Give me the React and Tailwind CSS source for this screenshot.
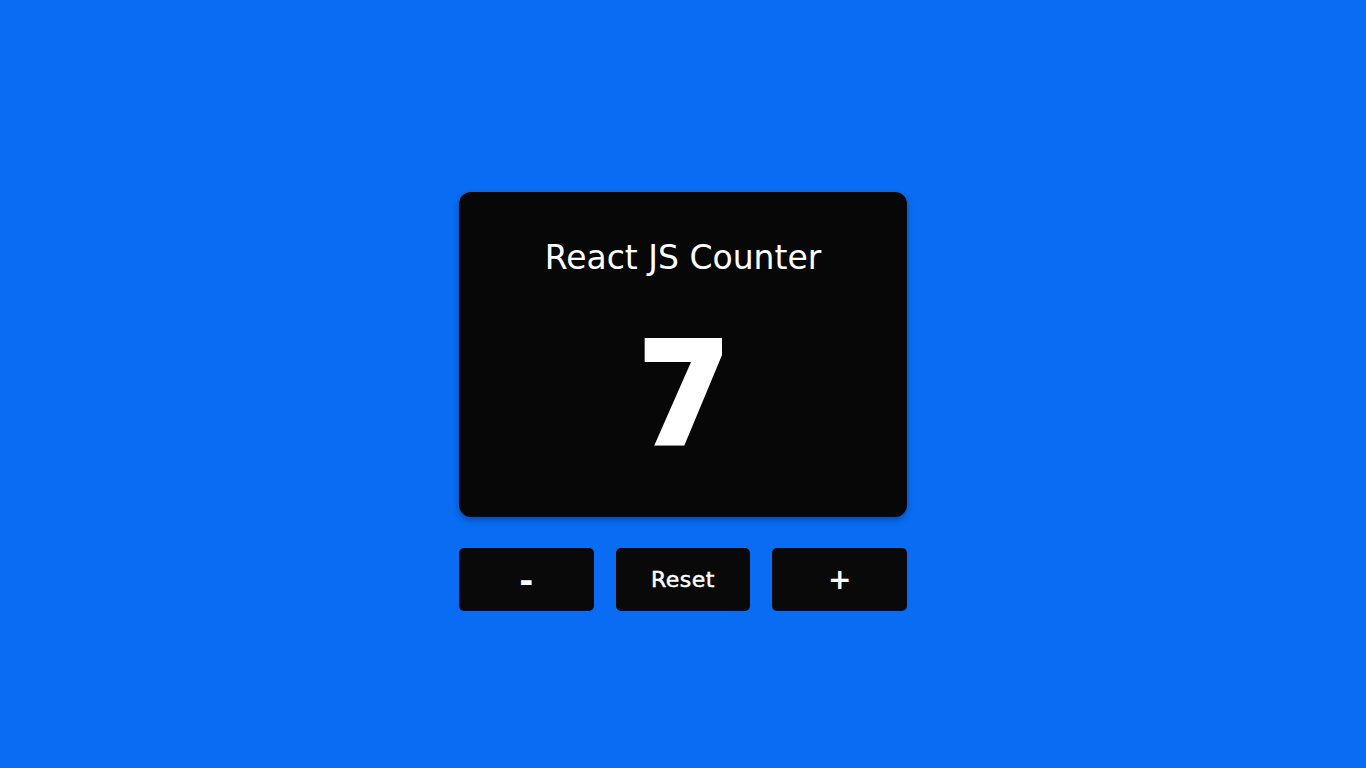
export default function App() {
  const count = 7

  return (
    <div className="min-h-screen bg-[#0a6cf2] flex flex-col items-center justify-center pt-[35px]" style={{ fontFamily: '"DejaVu Sans", "Open Sans", sans-serif' }}>
      <div className="w-[448px] h-[325px] bg-[#070707] rounded-xl shadow-[0_3px_6px_rgba(0,0,0,0.3)] flex flex-col items-center">
        <h1 className="mt-[46px] text-[33px] leading-[40px] text-white font-normal">React JS Counter</h1>
        <div className="mt-[35px] text-[150px] leading-[150px] font-extrabold text-white" style={{ fontFamily: '"Open Sans", sans-serif' }}>{count}</div>
      </div>
      <div className="mt-[31px] w-[448px] grid grid-cols-3 gap-[22px]">
        <button className="h-[63px] bg-[#090909] rounded-[5px] text-white text-[34px] font-semibold leading-none">-</button>
        <button className="h-[63px] bg-[#090909] rounded-[5px] text-white text-[22px] tracking-[0.5px] [-webkit-text-stroke:0.5px_white]">Reset</button>
        <button className="h-[63px] bg-[#090909] rounded-[5px] text-white text-[28px] font-semibold">+</button>
      </div>
    </div>
  )
}
